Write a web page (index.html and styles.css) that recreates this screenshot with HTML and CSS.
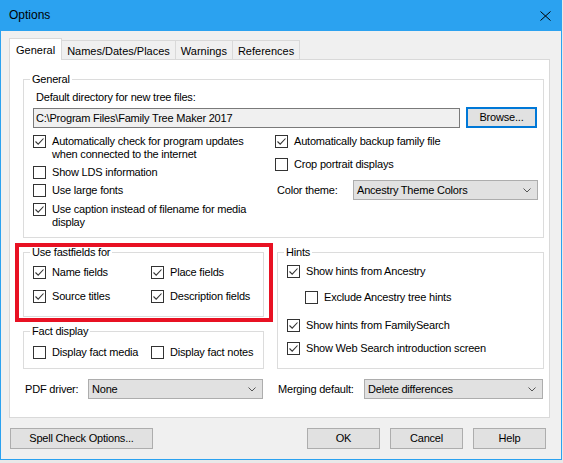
FILE: index.html
```html
<!DOCTYPE html>
<html>
<head>
<meta charset="utf-8">
<title>Options</title>
<link rel="stylesheet" href="styles.css">
</head>
<body>
<div class="window">
  <div class="titlebar">
    <span class="title">Options</span>
    <svg class="close" width="11" height="10" viewBox="0 0 11 10"><path d="M0.5 0.5 L10.5 9.5 M10.5 0.5 L0.5 9.5" stroke="#000" stroke-width="1" fill="none"/></svg>
  </div>
  <div class="client">
    <div class="tabs">
      <div class="tab active">General</div>
      <div class="tab">Names/Dates/Places</div>
      <div class="tab">Warnings</div>
      <div class="tab">References</div>
    </div>
    <div class="panel">
      <fieldset class="group general">
        <legend>General</legend>
        <div class="content">
          <div class="dir-label">Default directory for new tree files:</div>
          <div class="dir-row">
            <div class="textbox">C:\Program Files\Family Tree Maker 2017</div>
            <div class="btn browse">Browse...</div>
          </div>
          <div class="gen-cols">
            <div class="col">
              <div class="cb r1"><span class="box"><svg viewBox="0 0 11 11"><path d="M1.5 5.5 L4.2 8.2 L9.5 2.5"/></svg></span><span class="txt">Automatically check for program updates<br>when connected to the internet</span></div>
              <div class="cb r2"><span class="box"></span><span class="txt">Show LDS information</span></div>
              <div class="cb r3"><span class="box"></span><span class="txt">Use large fonts</span></div>
              <div class="cb r4"><span class="box"><svg viewBox="0 0 11 11"><path d="M1.5 5.5 L4.2 8.2 L9.5 2.5"/></svg></span><span class="txt">Use caption instead of filename for media<br>display</span></div>
            </div>
            <div class="col">
              <div class="cb"><span class="box"><svg viewBox="0 0 11 11"><path d="M1.5 5.5 L4.2 8.2 L9.5 2.5"/></svg></span><span class="txt">Automatically backup family file</span></div>
              <div class="cb rc2"><span class="box"></span><span class="txt">Crop portrait displays</span></div>
              <div class="field-row rc3">
                <span class="field-label theme-label">Color theme:</span>
                <div class="select theme-select"><span>Ancestry Theme Colors</span><svg width="8" height="5" viewBox="0 0 8 5"><path d="M0.5 0.5 L4 4 L7.5 0.5" stroke="#555" fill="none"/></svg></div>
              </div>
            </div>
          </div>
        </div>
      </fieldset>

      <div class="lower">
        <div class="lower-left">
          <fieldset class="group fast">
            <legend>Use fastfields for</legend>
            <div class="content fast-grid">
              <div class="cb"><span class="box"><svg viewBox="0 0 11 11"><path d="M1.5 5.5 L4.2 8.2 L9.5 2.5"/></svg></span><span class="txt">Name fields</span></div>
              <div class="cb"><span class="box"><svg viewBox="0 0 11 11"><path d="M1.5 5.5 L4.2 8.2 L9.5 2.5"/></svg></span><span class="txt">Place fields</span></div>
              <div class="cb"><span class="box"><svg viewBox="0 0 11 11"><path d="M1.5 5.5 L4.2 8.2 L9.5 2.5"/></svg></span><span class="txt">Source titles</span></div>
              <div class="cb"><span class="box"><svg viewBox="0 0 11 11"><path d="M1.5 5.5 L4.2 8.2 L9.5 2.5"/></svg></span><span class="txt">Description fields</span></div>
            </div>
          </fieldset>
          <fieldset class="group fact">
            <legend>Fact display</legend>
            <div class="content fact-grid">
              <div class="cb"><span class="box"></span><span class="txt">Display fact media</span></div>
              <div class="cb"><span class="box"></span><span class="txt">Display fact notes</span></div>
            </div>
          </fieldset>
        </div>
        <fieldset class="group hints">
          <legend>Hints</legend>
          <div class="content">
            <div class="cb h1"><span class="box"><svg viewBox="0 0 11 11"><path d="M1.5 5.5 L4.2 8.2 L9.5 2.5"/></svg></span><span class="txt">Show hints from Ancestry</span></div>
            <div class="cb h2"><span class="box"></span><span class="txt">Exclude Ancestry tree hints</span></div>
            <div class="cb h3"><span class="box"><svg viewBox="0 0 11 11"><path d="M1.5 5.5 L4.2 8.2 L9.5 2.5"/></svg></span><span class="txt">Show hints from FamilySearch</span></div>
            <div class="cb h4"><span class="box"><svg viewBox="0 0 11 11"><path d="M1.5 5.5 L4.2 8.2 L9.5 2.5"/></svg></span><span class="txt">Show Web Search introduction screen</span></div>
          </div>
        </fieldset>
      </div>

      <div class="drivers">
        <div class="field-row">
          <span class="field-label pdf-label">PDF driver:</span>
          <div class="select pdf-select"><span>None</span><svg width="8" height="5" viewBox="0 0 8 5"><path d="M0.5 0.5 L4 4 L7.5 0.5" stroke="#555" fill="none"/></svg></div>
        </div>
        <div class="field-row">
          <span class="field-label merge-label">Merging default:</span>
          <div class="select merge-select"><span>Delete differences</span><svg width="8" height="5" viewBox="0 0 8 5"><path d="M0.5 0.5 L4 4 L7.5 0.5" stroke="#555" fill="none"/></svg></div>
        </div>
      </div>
    </div>

    <div class="buttons">
      <div class="btn spell">Spell Check Options...</div>
      <div class="spacer"></div>
      <div class="btn dlg">OK</div>
      <div class="btn dlg">Cancel</div>
      <div class="btn dlg">Help</div>
    </div>
  </div>
</div>
<div class="highlight"></div>
</body>
</html>
```
FILE: styles.css
```css
* { box-sizing: border-box; }
html, body { margin: 0; padding: 0; }
body {
  width: 563px;
  height: 463px;
  overflow: hidden;
  position: relative;
  background: #e9e9e9;
  font-family: "Liberation Sans", Arial, sans-serif;
  font-size: 11px;
  line-height: 13px;
  letter-spacing: -0.2px;
  color: #000;
}
.window {
  width: 562px;
  height: 460px;
  border: 1px solid #2ba2f0;
  border-top: none;
  background: #f0f0f0;
  display: flex;
  flex-direction: column;
}
.titlebar {
  height: 31px;
  flex: none;
  background: #2ba2f0;
  display: flex;
  align-items: center;
  justify-content: space-between;
  padding: 0 10px 0 8px;
}
.title { font-size: 12px; letter-spacing: 0; }
.close { display: block; }
.client { padding: 7px 11px 0 8px; }

.tabs {
  display: flex;
  align-items: flex-end;
  height: 21px;
  position: relative;
  z-index: 1;
  letter-spacing: 0;
}
.tab {
  height: 19px;
  padding: 4px 5px 0 5px;
  line-height: 13px;
  border: 1px solid #d9d9d9;
  border-left: none;
  border-bottom: none;
  background: #f0f0f0;
  white-space: nowrap;
}
.tab.active {
  height: 22px;
  margin-bottom: -1px;
  padding: 5px 6px 0 6px;
  background: #fff;
  border-left: 1px solid #d9d9d9;
}

.panel {
  height: 359px;
  border: 1px solid #d9d9d9;
  background: #fff;
  padding: 13px 5px 0 13px;
}

fieldset.group {
  display: block;
  margin: 0;
  padding: 0;
  min-width: 0;
  border: 1px solid #dcdcdc;
}
fieldset.group legend {
  margin-left: 6px;
  padding: 0 2px;
  line-height: 13px;
}
.content { padding: 0 0 0 9px; }

.general .content { padding-bottom: 8px; }
.dir-label { margin: 5px 0 0 3px; }
.dir-row { display: flex; align-items: center; margin-top: 3px; height: 21px; }
.textbox {
  width: 427px;
  height: 20px;
  border: 1px solid #7a7a7a;
  background: #f0f0f0;
  padding: 3px 0 0 2px;
  white-space: nowrap;
  overflow: hidden;
}
.btn {
  display: flex;
  align-items: center;
  justify-content: center;
  height: 21px;
  background: #e1e1e1;
  border: 1px solid #adadad;
  white-space: nowrap;
}
.browse {
  width: 71px;
  margin-left: 6px;
  border-color: #0078d7;
  box-shadow: inset 0 0 0 1px #0078d7;
}

.gen-cols {
  display: grid;
  grid-template-columns: 242px 1fr;
  margin-top: 7px;
}
.cb { display: flex; align-items: flex-start; }
.box {
  flex: none;
  width: 13px;
  height: 13px;
  border: 1px solid #333;
  background: #fff;
  margin-right: 6px;
}
.box svg {
  display: block;
  width: 11px;
  height: 11px;
  fill: none;
  stroke: #333;
  stroke-width: 1.1;
}
.txt { white-space: nowrap; }
.r2, .r3 { margin-top: 5px; }
.r4 { margin-top: 6px; }
.rc2 { margin-top: 10px; }
.rc3 { margin-top: 9px; }

.field-row { display: flex; align-items: center; height: 20px; }
.field-label { flex: none; white-space: nowrap; }
.theme-label { width: 78px; padding-left: 2px; }
.select {
  display: flex;
  align-items: center;
  justify-content: space-between;
  height: 20px;
  background: #e1e1e1;
  border: 1px solid #adadad;
  padding: 0 6px 0 3px;
  white-space: nowrap;
}
.select svg { display: block; }
.theme-select { width: 185px; }

.lower {
  display: grid;
  grid-template-columns: 241px 267px;
  column-gap: 13px;
  align-items: stretch;
  margin-top: 8px;
}
.lower-left { display: block; }
.fast-grid {
  display: grid;
  grid-template-columns: 118px 118px;
  grid-template-rows: 13px 13px;
  row-gap: 11px;
  padding-top: 7px;
  padding-bottom: 13px;
}
fieldset.group.fact { margin-top: 8px; }
.fact-grid {
  display: grid;
  grid-template-columns: 118px 118px;
  grid-template-rows: 13px;
  padding-top: 8px;
  padding-bottom: 9px;
}
.h1 { margin-top: 6px; }
.h2 { margin-top: 13px; margin-left: 18px; }
.h3 { margin-top: 15px; }
.h4 { margin-top: 10px; }

.drivers {
  display: grid;
  grid-template-columns: 241px 267px;
  column-gap: 13px;
  margin-top: 10px;
}
.pdf-label { width: 65px; padding-left: 2px; }
.pdf-select { width: 175px; }
.merge-label { width: 87px; padding-left: 1px; }
.merge-select { width: 179px; }

.buttons {
  display: flex;
  margin-top: 10px;
  padding: 0 4px 0 1px;
}
.spacer { flex: 1; }
.spell { width: 143px; }
.dlg { width: 73px; margin-left: 10px; }

.highlight {
  position: absolute;
  left: 15px;
  top: 243px;
  width: 258px;
  height: 79px;
  border: 4px solid #e81123;
  pointer-events: none;
}
```
